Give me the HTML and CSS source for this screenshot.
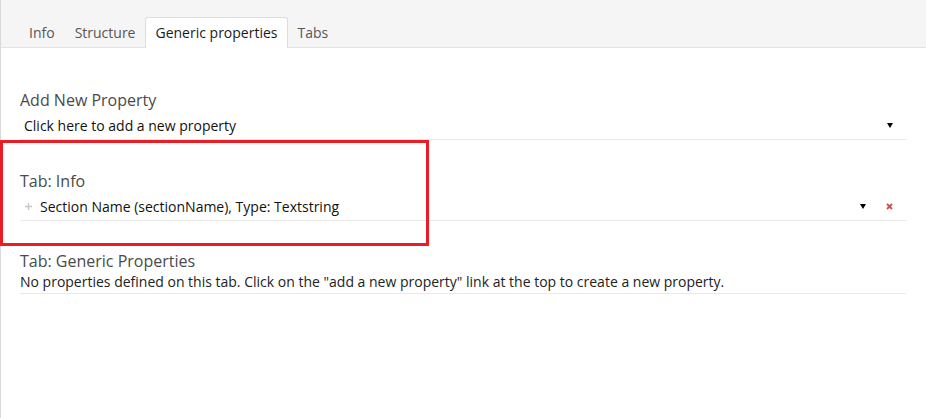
FILE: index.html
```html
<!DOCTYPE html>
<html>
<head>
<meta charset="utf-8">
<link rel="stylesheet" href="styles.css">
</head>
<body>
<div class="page">
  <div class="tabbar">
    <div class="tab">Info</div>
    <div class="tab">Structure</div>
    <div class="tab active">Generic properties</div>
    <div class="tab">Tabs</div>
  </div>
  <div class="content">
    <div class="group first">
      <div class="heading">Add New Property</div>
      <div class="row add">
        <span class="label">Click here to add a new property</span>
        <span class="caret"></span>
      </div>
    </div>
    <div class="group">
      <div class="heading">Tab: Info</div>
      <div class="row prop">
        <svg class="drag" width="7" height="7" viewBox="0 0 7 7"><path d="M3.5 0 L3.5 7 M0 3.5 L7 3.5" stroke="#c8c8c8" stroke-width="1.4"/></svg>
        <span class="label">Section Name (sectionName), Type: Textstring</span>
        <span class="caret"></span>
        <svg class="remove" width="7" height="7" viewBox="0 0 7 7"><path d="M1 1 L6 6 M6 1 L1 6" stroke="#c9504f" stroke-width="1.8"/></svg>
      </div>
    </div>
    <div class="group last">
      <div class="heading">Tab: Generic Properties</div>
      <div class="row note">No properties defined on this tab. Click on the "add a new property" link at the top to create a new property.</div>
    </div>
  </div>
  <div class="highlight"></div>
</div>
</body>
</html>
```
FILE: styles.css
```css
html, body {
  margin: 0;
  padding: 0;
  background: #fff;
  font-family: "Open Sans", "Noto Sans", sans-serif;
}
.page {
  position: relative;
  border-left: 1px solid #d9d9d9;
  min-height: 418px;
  box-sizing: border-box;
}
.tabbar {
  height: 48px;
  box-sizing: border-box;
  background: #f5f5f5;
  border-bottom: 1px solid #e3e3e3;
  padding-left: 18px;
  display: flex;
  align-items: flex-end;
}
.tab {
  height: 30px;
  line-height: 30px;
  padding: 0 10px;
  font-size: 14px;
  color: #555;
  margin-bottom: -1px;
}
.tab.active {
  padding: 0 9px;
  background: #fff;
  border: 1px solid #dedede;
  border-bottom: none;
  border-radius: 3px 3px 0 0;
  color: #1b1b1b;
}
.content {
  padding: 0 20px 0 19px;
}
.group {
  margin-top: 30px;
}
.group.first {
  margin-top: 41px;
}
.group.last {
  margin-top: 29px;
}
.heading {
  font-size: 16px;
  line-height: 22px;
  color: #4a4a4a;
}
.row {
  display: flex;
  align-items: center;
  height: 28px;
  border-bottom: 1px solid #e9e9e9;
  font-size: 14px;
  color: #111;
}
.row .label {
  flex: 1;
}
.row.add {
  padding-left: 4px;
}
.row.prop {
  padding-left: 5px;
}
.drag {
  margin-right: 8px;
}
.caret {
  width: 0;
  height: 0;
  border-left: 3.5px solid transparent;
  border-right: 3.5px solid transparent;
  border-top: 5px solid #000;
}
.row.add .caret {
  margin-right: 13px;
}
.row.prop .caret {
  margin-right: 20px;
}
.remove {
  margin-right: 13px;
}
.row.note {
  height: 21px;
  align-items: flex-start;
  line-height: 20px;
  color: #222;
}
.highlight {
  position: absolute;
  left: -1px;
  top: 140px;
  width: 429px;
  height: 106px;
  box-sizing: border-box;
  border: 3px solid #ec1c24;
}
```
